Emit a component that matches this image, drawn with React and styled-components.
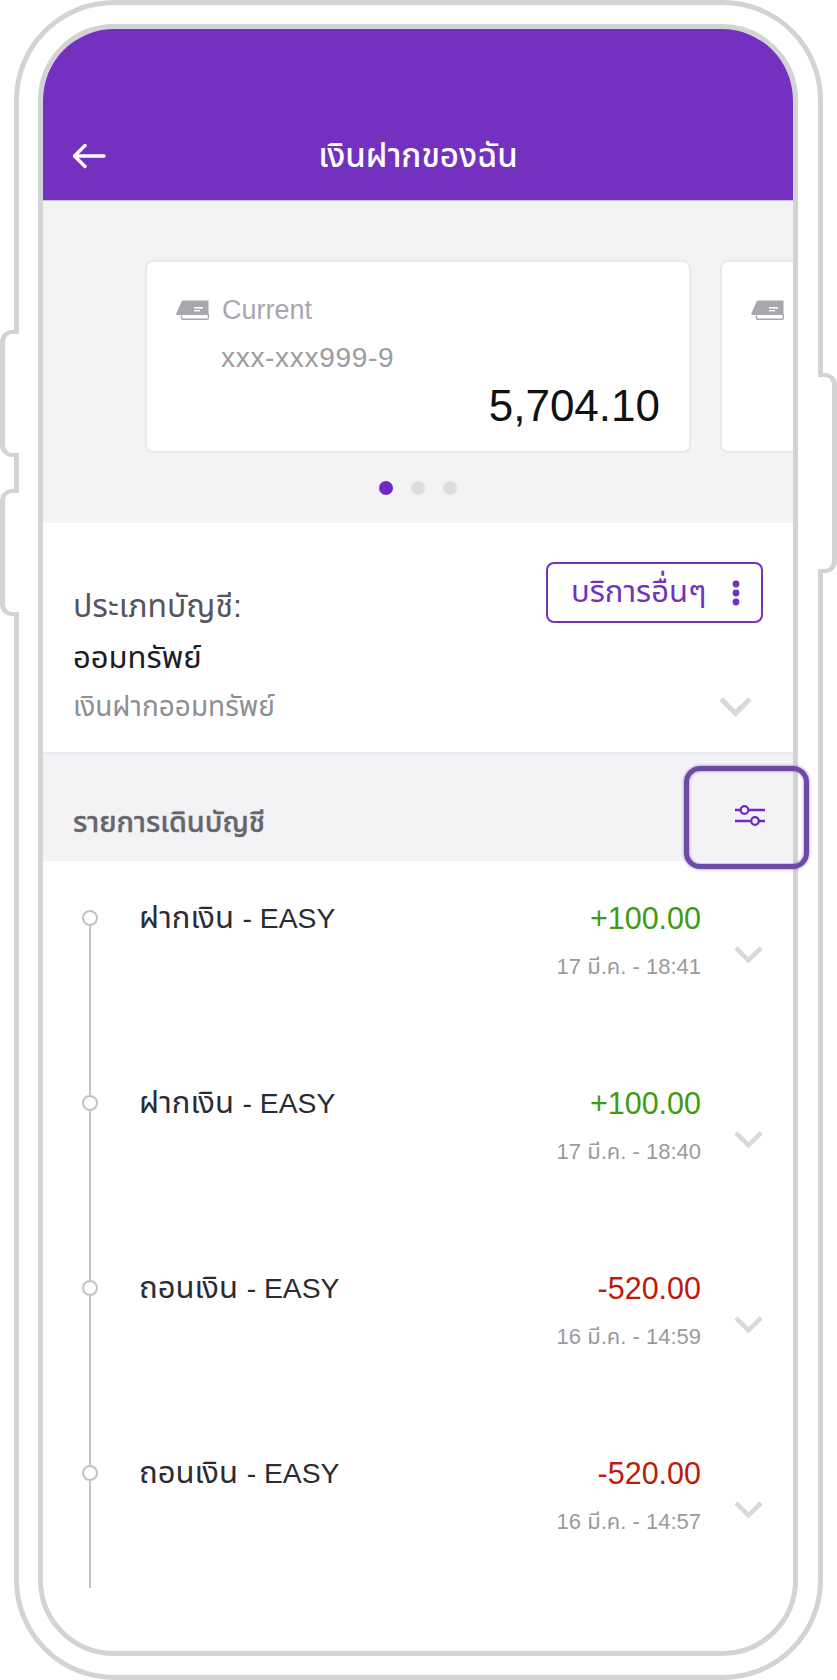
import React from 'react';
import styled, { createGlobalStyle } from 'styled-components';

const FONT = `"Liberation Sans", "Noto Sans Thai", "Noto Sans", sans-serif`;

const Global = createGlobalStyle`
  html, body { margin: 0; padding: 0; background: #fff; overflow: hidden; }
  * { box-sizing: border-box; }
  body { font-family: ${FONT}; }
`;

const Stage = styled.div`
  position: relative;
  width: 837px;
  height: 1680px;
  padding-left: 14px;
  background: #fff;
`;

const Frame = styled.div`
  position: relative;
  width: 809px;
  height: 1680px;
  padding: 19px 20px 19px 19px;
  border: 5px solid #d1d3d4;
  border-radius: 100px;
`;

const SideKey = styled.div`
  position: absolute;
  top: ${p => p.$top}px;
  height: ${p => p.$height}px;
  width: 19px;
  background: #fff;
  border: 4px solid #d1d3d4;
  ${p => p.$right
    ? `left: 818px; border-left: none; border-right-width: 5px; border-radius: 0 12px 12px 0;`
    : `left: 0; border-right: none; border-left-width: 5px; border-radius: 12px 0 0 12px;`}
`;

const Bezel = styled.div`
  width: 760px;
  height: 1632px;
  border: 5px solid #d1d3d4;
  border-radius: 76px;
  overflow: hidden;
  background: #fff;
`;

const Header = styled.header`
  height: 172px;
  background: #7431bf;
  border-bottom: 1px solid #c9bfdc;
  display: grid;
  grid-template-columns: 1fr auto 1fr;
  align-items: center;
  padding: 83px 29px 0 29px;
  color: #fff;
`;

const Title = styled.h1`
  margin: 0;
  font-size: 33px;
  line-height: 46px;
  font-weight: 500;
  color: #fff;
`;

const Carousel = styled.section`
  height: 322px;
  background: #f3f3f6;
  padding-top: 59px;
  overflow: hidden;
`;

const Track = styled.div`
  display: flex;
  gap: 29px;
  padding-left: 102px;
`;

const Card = styled.div`
  flex: 0 0 546px;
  height: 193px;
  background: #fff;
  border: 2px solid #e9e9ec;
  border-radius: 8px;
  padding: 31px 29px 0 29px;
`;

const CardHead = styled.div`
  display: flex;
  align-items: center;
  gap: 13px;
  height: 34px;
  font-size: 27px;
  color: #a7a7ad;
`;

const AccountNo = styled.div`
  margin: 16px 0 0 45px;
  font-size: 28px;
  line-height: 30px;
  letter-spacing: 0.7px;
  color: #9c9ca1;
`;

const Balance = styled.div`
  margin-top: 8px;
  text-align: right;
  font-size: 44px;
  line-height: 50px;
  color: #111;
`;

const Dots = styled.div`
  display: flex;
  justify-content: center;
  gap: 18px;
  margin-top: 28px;
`;

const Dot = styled.span`
  width: 14px;
  height: 14px;
  border-radius: 50%;
  background: ${p => (p.$active ? '#7029c2' : '#dddddf')};
`;

const Account = styled.section`
  height: 229px;
  background: #fff;
  padding: 0 30px;
`;

const AccountRow = styled.div`
  display: flex;
  justify-content: space-between;
  align-items: flex-start;
  padding-top: 39px;
`;

const AccountLabel = styled.div`
  margin-top: 21px;
  font-size: 32px;
  line-height: 46px;
  color: #55555f;
`;

const AccountType = styled.div`
  margin-top: 5px;
  font-size: 31px;
  line-height: 48px;
  color: #1c1c22;
`;

const AccountFoot = styled.div`
  display: flex;
  justify-content: space-between;
  align-items: center;
  margin-top: 1px;
  font-size: 28px;
  line-height: 48px;
  color: #8e8e95;
`;

const FootChevron = styled.div`
  margin-right: 11px;
  line-height: 0;
`;

const MoreButton = styled.button`
  display: flex;
  align-items: center;
  justify-content: space-between;
  width: 217px;
  height: 61px;
  padding: 0 20px 0 23px;
  background: #fff;
  border: 2px solid #7232bd;
  border-radius: 8px;
  color: #7232bd;
  font-family: inherit;
  font-size: 31px;
`;

const SectionBar = styled.div`
  height: 109px;
  background: #f3f3f6;
  box-shadow: inset 0 3px 3px -2px #e4e4e8;
  display: flex;
  justify-content: space-between;
  align-items: flex-start;
  padding: 49px 28px 0 30px;
`;

const SectionTitle = styled.h2`
  margin: 0;
  font-size: 28.8px;
  line-height: 42px;
  font-weight: 500;
  -webkit-text-stroke: 0.4px #66666e;
  color: #66666e;
`;

const FilterSlot = styled.div`
  margin-top: 4px;
  line-height: 0;
`;

const Highlight = styled.div`
  position: absolute;
  left: 665px;
  top: 761px;
  width: 125px;
  height: 103px;
  border: 5px solid #6d4aa3;
  border-radius: 16px;
  box-shadow: 0 0 3px #9a5fe0, inset 0 0 3px #9a5fe0;
`;

const List = styled.ul`
  list-style: none;
  margin: 0;
  padding: 49px 30px 0 38px;
  background: #fff;
`;

const Row = styled.li`
  display: flex;
  height: ${p => (p.$last ? 123 : 185)}px;
`;

const Rail = styled.div`
  flex: 0 0 17px;
  display: flex;
  flex-direction: column;
  align-items: center;
`;

const Node = styled.span`
  flex: none;
  width: 16px;
  height: 16px;
  border: 2px solid #c2c2c9;
  border-radius: 50%;
`;

const RailLine = styled.span`
  flex: 1;
  width: 2px;
  background: #c2c2c9;
`;

const RowTitle = styled.div`
  flex: 1;
  margin: -12px 0 0 41px;
  font-size: 31px;
  line-height: 40px;
  color: #2b2b33;
`;

const RowBrand = styled.span`
  font-size: 28.3px;
`;

const RowAmounts = styled.div`
  margin-top: -12px;
  text-align: right;
`;

const Amount = styled.div`
  font-size: 30.5px;
  line-height: 40px;
  color: ${p => (p.$in ? '#3f9a14' : '#bd1a0b')};
`;

const RowDate = styled.div`
  margin-top: 15px;
  font-size: 22px;
  line-height: 28px;
  color: #9a9aa0;
`;

const RowChevron = styled.div`
  margin: 36px 0 0 33px;
  line-height: 0;
`;

const ArrowIcon = () => (
  <svg width="34" height="26" viewBox="0 0 34 26" fill="none" stroke="#fff" strokeWidth="3.4" strokeLinecap="round" strokeLinejoin="round">
    <path d="M32 13H2.5M13 2.5 2.5 13 13 23.5" />
  </svg>
);

const AccountIcon = () => (
  <svg width="33" height="20" viewBox="0 0 33 20" style={{ flex: 'none' }}>
    <path d="M7 0.5H32.5V15H1.5C0.5 15 0 14.2 0.3 13.4L5.6 1.5C5.9 0.8 6.4 0.5 7 0.5Z" fill="#a7a7ad" />
    <path d="M5.5 15.5V18C5.5 18.8 6 19.2 6.7 19.2H31C32 19.2 32.4 18.8 32.4 18V14" fill="none" stroke="#a7a7ad" strokeWidth="1.4" />
    <rect x="18" y="7" width="9" height="1.6" fill="#fff" />
    <rect x="18" y="10" width="6" height="1.4" fill="#fff" />
  </svg>
);

const KebabIcon = () => (
  <svg width="10" height="26" viewBox="0 0 10 26" fill="#7232bd" style={{ flex: 'none' }}>
    <circle cx="5" cy="4" r="3.4" />
    <circle cx="5" cy="13" r="3.4" />
    <circle cx="5" cy="22" r="3.4" />
  </svg>
);

const Chevron = ({ w }) => (
  <svg width={w} height={w * 0.62} viewBox="0 0 32 20" fill="none" stroke="#d9d9db" strokeWidth="5">
    <path d="M2 2 16 16 30 2" />
  </svg>
);

const FilterIcon = () => (
  <svg width="30" height="22" viewBox="0 0 30 22" fill="none" stroke="#7029c2" strokeWidth="2.3">
    <path d="M0 5H5M14 5H30M0 16H15M24 16H30" />
    <circle cx="9.5" cy="5" r="3.8" />
    <circle cx="20" cy="16" r="3.8" />
  </svg>
);

const items = [
  { title: 'ฝากเงิน', amount: '+100.00', date: '17 มี.ค. - 18:41', in: true },
  { title: 'ฝากเงิน', amount: '+100.00', date: '17 มี.ค. - 18:40', in: true },
  { title: 'ถอนเงิน', amount: '-520.00', date: '16 มี.ค. - 14:59', in: false },
  { title: 'ถอนเงิน', amount: '-520.00', date: '16 มี.ค. - 14:57', in: false },
];

export default function App() {
  return (
    <Stage>
      <Global />
      <Frame>
        <Bezel>
          <Header>
            <ArrowIcon />
            <Title>เงินฝากของฉัน</Title>
          </Header>
          <Carousel>
            <Track>
              <Card>
                <CardHead>
                  <AccountIcon />
                  Current
                </CardHead>
                <AccountNo>xxx-xxx999-9</AccountNo>
                <Balance>5,704.10</Balance>
              </Card>
              <Card>
                <CardHead>
                  <AccountIcon />
                </CardHead>
              </Card>
            </Track>
            <Dots>
              <Dot $active />
              <Dot />
              <Dot />
            </Dots>
          </Carousel>
          <Account>
            <AccountRow>
              <AccountLabel>ประเภทบัญชี:</AccountLabel>
              <MoreButton>
                บริการอื่นๆ
                <KebabIcon />
              </MoreButton>
            </AccountRow>
            <AccountType>ออมทรัพย์</AccountType>
            <AccountFoot>
              เงินฝากออมทรัพย์
              <FootChevron>
                <Chevron w={33} />
              </FootChevron>
            </AccountFoot>
          </Account>
          <SectionBar>
            <SectionTitle>รายการเดินบัญชี</SectionTitle>
            <FilterSlot>
              <FilterIcon />
            </FilterSlot>
          </SectionBar>
          <List>
            {items.map((item, i) => (
              <Row key={i} $last={i === items.length - 1}>
                <Rail>
                  <Node />
                  <RailLine />
                </Rail>
                <RowTitle>
                  {item.title} <RowBrand>- EASY</RowBrand>
                </RowTitle>
                <RowAmounts>
                  <Amount $in={item.in}>{item.amount}</Amount>
                  <RowDate>{item.date}</RowDate>
                </RowAmounts>
                <RowChevron>
                  <Chevron w={29} />
                </RowChevron>
              </Row>
            ))}
          </List>
        </Bezel>
        <Highlight />
      </Frame>
      <SideKey $top={330} $height={127} />
      <SideKey $top={489} $height={127} />
      <SideKey $right $top={373} $height={200} />
    </Stage>
  );
}
